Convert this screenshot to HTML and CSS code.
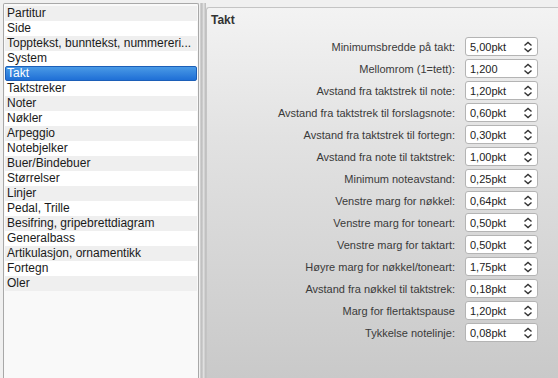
FILE: index.html
```html
<!DOCTYPE html>
<html lang="nb">
<head>
    <meta charset="UTF-8">
    <title>Stil</title>
    <link rel="stylesheet" href="styles.css">
</head>
<body>
    <div class="window">
        <ul class="pages">
            <li>Partitur</li>
            <li>Side</li>
            <li>Topptekst, bunntekst, nummereri...</li>
            <li>System</li>
            <li class="selected">Takt</li>
            <li>Taktstreker</li>
            <li>Noter</li>
            <li>Nøkler</li>
            <li>Arpeggio</li>
            <li>Notebjelker</li>
            <li>Buer/Bindebuer</li>
            <li>Størrelser</li>
            <li>Linjer</li>
            <li>Pedal, Trille</li>
            <li>Besifring, gripebrettdiagram</li>
            <li>Generalbass</li>
            <li>Artikulasjon, ornamentikk</li>
            <li>Fortegn</li>
            <li>Oler</li>
        </ul>
        <div class="splitter"></div>
        <div class="panel">
            <h2>Takt</h2>
            <div class="form">
                <label>Minimumsbredde på takt:</label>
                <div class="spin"><span>5,00pkt</span><svg viewBox="0 0 10 12"><path d="M1.5 4.5 L5 1.5 L8.5 4.5 M1.5 7.5 L5 10.5 L8.5 7.5"/></svg></div>
                <label>Mellomrom (1=tett):</label>
                <div class="spin"><span>1,200</span><svg viewBox="0 0 10 12"><path d="M1.5 4.5 L5 1.5 L8.5 4.5 M1.5 7.5 L5 10.5 L8.5 7.5"/></svg></div>
                <label>Avstand fra taktstrek til note:</label>
                <div class="spin"><span>1,20pkt</span><svg viewBox="0 0 10 12"><path d="M1.5 4.5 L5 1.5 L8.5 4.5 M1.5 7.5 L5 10.5 L8.5 7.5"/></svg></div>
                <label>Avstand fra taktstrek til forslagsnote:</label>
                <div class="spin"><span>0,60pkt</span><svg viewBox="0 0 10 12"><path d="M1.5 4.5 L5 1.5 L8.5 4.5 M1.5 7.5 L5 10.5 L8.5 7.5"/></svg></div>
                <label>Avstand fra taktstrek til fortegn:</label>
                <div class="spin"><span>0,30pkt</span><svg viewBox="0 0 10 12"><path d="M1.5 4.5 L5 1.5 L8.5 4.5 M1.5 7.5 L5 10.5 L8.5 7.5"/></svg></div>
                <label>Avstand fra note til taktstrek:</label>
                <div class="spin"><span>1,00pkt</span><svg viewBox="0 0 10 12"><path d="M1.5 4.5 L5 1.5 L8.5 4.5 M1.5 7.5 L5 10.5 L8.5 7.5"/></svg></div>
                <label>Minimum noteavstand:</label>
                <div class="spin"><span>0,25pkt</span><svg viewBox="0 0 10 12"><path d="M1.5 4.5 L5 1.5 L8.5 4.5 M1.5 7.5 L5 10.5 L8.5 7.5"/></svg></div>
                <label>Venstre marg for nøkkel:</label>
                <div class="spin"><span>0,64pkt</span><svg viewBox="0 0 10 12"><path d="M1.5 4.5 L5 1.5 L8.5 4.5 M1.5 7.5 L5 10.5 L8.5 7.5"/></svg></div>
                <label>Venstre marg for toneart:</label>
                <div class="spin"><span>0,50pkt</span><svg viewBox="0 0 10 12"><path d="M1.5 4.5 L5 1.5 L8.5 4.5 M1.5 7.5 L5 10.5 L8.5 7.5"/></svg></div>
                <label>Venstre marg for taktart:</label>
                <div class="spin"><span>0,50pkt</span><svg viewBox="0 0 10 12"><path d="M1.5 4.5 L5 1.5 L8.5 4.5 M1.5 7.5 L5 10.5 L8.5 7.5"/></svg></div>
                <label>Høyre marg for nøkkel/toneart:</label>
                <div class="spin"><span>1,75pkt</span><svg viewBox="0 0 10 12"><path d="M1.5 4.5 L5 1.5 L8.5 4.5 M1.5 7.5 L5 10.5 L8.5 7.5"/></svg></div>
                <label>Avstand fra nøkkel til taktstrek:</label>
                <div class="spin"><span>0,18pkt</span><svg viewBox="0 0 10 12"><path d="M1.5 4.5 L5 1.5 L8.5 4.5 M1.5 7.5 L5 10.5 L8.5 7.5"/></svg></div>
                <label>Marg for flertaktspause</label>
                <div class="spin"><span>1,20pkt</span><svg viewBox="0 0 10 12"><path d="M1.5 4.5 L5 1.5 L8.5 4.5 M1.5 7.5 L5 10.5 L8.5 7.5"/></svg></div>
                <label>Tykkelse notelinje:</label>
                <div class="spin"><span>0,08pkt</span><svg viewBox="0 0 10 12"><path d="M1.5 4.5 L5 1.5 L8.5 4.5 M1.5 7.5 L5 10.5 L8.5 7.5"/></svg></div>
            </div>
        </div>
    </div>
</body>
</html>
```

FILE: styles.css
```css
body {
    margin: 0;
    width: 558px;
    height: 378px;
    overflow: hidden;
    background-color: #f0f0f0;
    font-family: "Liberation Sans", Arial, sans-serif;
}

.window {
    display: flex;
    padding: 3px 0 0 3px;
    height: 375px;
}

/* page list on the left */
.pages {
    list-style: none;
    margin: 0;
    padding: 2px 1px;
    width: 192px;
    border: 1px solid #a8a8a8;
    border-bottom: none;
    border-radius: 2px 2px 0 0;
    background-color: #f9f9f9;
    font-size: 12px;
    color: #1a1a1a;
}

.pages li {
    height: 15px;
    line-height: 15px;
    padding-left: 2px;
    white-space: nowrap;
}

.pages li:nth-child(odd) {
    background-color: #efefef;
}

.pages li:nth-child(even) {
    background-color: #ffffff;
}

.pages li.selected {
    background: linear-gradient(#4a9ae6, #1f6fd6);
    border: 1px solid #1c5fb8;
    border-radius: 2px;
    color: #ffffff;
    height: 13px;
    line-height: 13px;
    padding-left: 1px;
}

.splitter {
    width: 6px;
    margin-left: 1px;
    background: linear-gradient(90deg, #d6d6d6, #bdbdbd 30%, #e2e2e2 60%, #b8b8b8);
}

/* settings panel */
.panel {
    flex: 1;
    margin-top: 4px;
    border: 1px solid #c4c4c4;
    border-right: none;
    border-bottom: none;
    border-radius: 3px 0 0 0;
    background: linear-gradient(#f3f3f3, #e2e2e2 35%, #c9c9c9);
    padding: 4px 0 0 4px;
}

.panel h2 {
    margin: 0;
    font-size: 12px;
    font-weight: bold;
    color: #333;
    height: 16px;
    line-height: 16px;
}

.form {
    display: grid;
    grid-template-columns: 244px 73px;
    column-gap: 10px;
    row-gap: 3px;
    margin-top: 9px;
    align-items: center;
}

.form label {
    text-align: right;
    font-size: 11px;
    color: #3a3a3a;
    white-space: nowrap;
}

.spin {
    display: flex;
    align-items: center;
    justify-content: space-between;
    height: 17px;
    padding: 0 4px 0 4px;
    background-color: #fff;
    border: 1px solid #b4b4b4;
    border-radius: 3px;
    font-size: 11px;
    color: #222;
}

.spin svg {
    width: 10px;
    height: 12px;
    fill: none;
    stroke: #333;
    stroke-width: 1.4;
}
```
